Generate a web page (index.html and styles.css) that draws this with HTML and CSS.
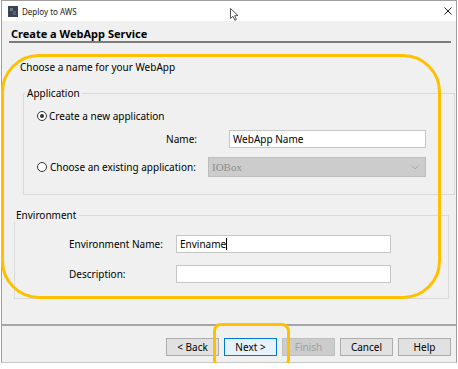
FILE: index.html
```html
<!DOCTYPE html>
<html lang="en">
    <head>
        <meta charset="utf-8">
        <link rel="stylesheet" href="styles.css">
    </head>
    <body>
        <div class="window">
            <div class="titlebar">
                <svg class="app-icon" width="10" height="11" viewBox="0 0 10 11">
                    <rect x="0" y="0" width="10" height="11" fill="#3a4552"/>
                    <rect x="2" y="2" width="3" height="3" fill="#6d7a88"/>
                    <rect x="5" y="5" width="3" height="4" fill="#56626f"/>
                </svg>
                <span class="title">Deploy to AWS</span>
                <svg class="close" width="8" height="8" viewBox="0 0 8 8">
                    <path d="M0.5 0.5 L7.5 7.5 M7.5 0.5 L0.5 7.5" stroke="#222" stroke-width="1"/>
                </svg>
            </div>
            <div class="header">
                <h1>Create a WebApp Service</h1>
            </div>
            <div class="content">
                <p class="intro">Choose a name for your WebApp</p>
                <fieldset class="group app">
                    <legend>Application</legend>
                    <div class="row choice">
                        <span class="radio checked"></span>
                        <span>Create a new application</span>
                    </div>
                    <div class="row field name-row">
                        <label>Name:</label>
                        <div class="input wide">WebApp Name</div>
                    </div>
                    <div class="row choice existing">
                        <span class="radio"></span>
                        <span class="existing-label">Choose an existing application:</span>
                        <div class="combo">
                            <span>IOBox</span>
                            <svg width="8" height="5" viewBox="0 0 8 5">
                                <path d="M0.5 0.5 L4 4 L7.5 0.5" fill="none" stroke="#aaa" stroke-width="1"/>
                            </svg>
                        </div>
                    </div>
                </fieldset>
                <fieldset class="group env">
                    <legend>Environment</legend>
                    <div class="row field">
                        <label>Environment Name:</label>
                        <div class="input">Enviname<span class="caret"></span></div>
                    </div>
                    <div class="row field">
                        <label>Description:</label>
                        <div class="input"></div>
                    </div>
                </fieldset>
            </div>
            <div class="footer">
                <button>&lt; Back</button>
                <button class="focus">Next &gt;</button>
                <button class="disabled">Finish</button>
                <button>Cancel</button>
                <button>Help</button>
            </div>
        </div>
        <div class="mark mark-main"></div>
        <div class="mark mark-next"></div>
        <svg class="pointer" width="9" height="13" viewBox="0 0 9 13">
            <path d="M0.5 0.5 L0.5 10.5 L3 8.3 L4.8 12.3 L6.4 11.6 L4.7 7.7 L8 7.6 Z" fill="#fff" stroke="#555" stroke-width="1"/>
        </svg>
    </body>
</html>
```
FILE: styles.css
```css
body{
    margin: 0;
    background: #fff;
    font-family: "Noto Sans", sans-serif;
    font-size: 10px;
    color: #000;
    position: relative;
}
.window{
    width: 456px;
    height: 363px;
    margin-left: 1px;
    box-sizing: border-box;
    border: 1px solid #a0a0a0;
    border-bottom-color: #c8c8c8;
    background: #f0f0f0;
    display: flex;
    flex-direction: column;
}
.titlebar{
    height: 20px;
    background: #fff;
    display: flex;
    align-items: center;
    padding: 0 3px 0 6px;
}
.app-icon{
    margin-right: 4px;
}
.title{
    font-size: 8px;
    color: #222;
    flex: 1;
}
.close{
    margin-right: 1px;
}
.header{
    padding: 6px 5px 0 7px;
}
.header h1{
    margin: 0;
    padding-left: 2px;
    font-size: 11px;
    line-height: 14px;
    font-weight: bold;
    border-bottom: 2px solid #7c7c7c;
}
.content{
    flex: 1;
}
.intro{
    margin: 17px 0 0 18px;
    line-height: 14px;
}
.group{
    border: 1px solid #dadada;
    padding: 0;
    min-width: 0;
}
.group legend{
    padding: 0 2px;
    line-height: 14px;
}
.app{
    margin: 12px 1px 0 21px;
    padding-bottom: 17px;
}
.app legend{
    margin-left: 1px;
}
.env{
    margin: 13px 7px 0 12px;
    padding-bottom: 15px;
}
.env legend{
    margin-left: -1px;
}
.row{
    display: flex;
    align-items: center;
    line-height: 14px;
}
.choice{
    margin-left: 13px;
}
.app .choice:first-of-type{
    margin-top: 9px;
}
.name-row{
    justify-content: flex-end;
    margin: 7px 28px 0 0;
}
.name-row label{
    margin-right: 32px;
}
.existing{
    margin-top: 9px;
}
.existing-label{
    margin-left: 1px;
    width: 158px;
    white-space: nowrap;
}
.radio{
    width: 10px;
    height: 10px;
    box-sizing: border-box;
    border: 1px solid #333;
    border-radius: 50%;
    background: #fff;
    margin-right: 2px;
    position: relative;
}
.radio.checked::after{
    content: '';
    position: absolute;
    left: 2px;
    top: 2px;
    width: 4px;
    height: 4px;
    border-radius: 50%;
    background: #333;
}
.input{
    width: 197px;
    height: 18px;
    box-sizing: border-box;
    border: 1px solid #c6c6c6;
    background: #fff;
    padding-left: 3px;
    line-height: 16px;
    display: flex;
    align-items: center;
}
.env .input{
    width: 215px;
}
.env .row{
    margin-left: 54px;
    margin-top: 12px;
}
.env .row:first-of-type{
    margin-top: 13px;
}
.env label{
    width: 107px;
}
.caret{
    width: 1px;
    height: 12px;
    background: #000;
}
.combo{
    width: 218px;
    height: 20px;
    box-sizing: border-box;
    border: 1px solid #bdbdbd;
    background: #cccccc;
    display: flex;
    align-items: center;
    justify-content: space-between;
    padding: 0 6px 0 3px;
    font-family: "Liberation Serif", serif;
    font-size: 11px;
    color: #8c8c8c;
}
.footer{
    border-top: 2px solid #a6a6a6;
    height: 38px;
    box-sizing: border-box;
    display: flex;
    justify-content: flex-end;
    align-items: flex-start;
    gap: 5px;
    padding: 12px 5px 0 0;
}
.footer button{
    width: 53px;
    height: 18px;
    box-sizing: border-box;
    border: 1px solid #adadad;
    background: #e1e1e1;
    font-family: "Noto Sans", sans-serif;
    font-size: 10px;
    color: #000;
    padding: 0;
    line-height: 16px;
}
.footer .focus{
    border-color: #0078d7;
    background: #e5f1fb;
}
.footer .disabled{
    border-color: #bfbfbf;
    background: #cccccc;
    color: #a0a0a0;
}
.mark{
    position: absolute;
    border: 3px solid #ffc000;
    box-sizing: border-box;
}
.mark-main{
    left: 1px;
    top: 54px;
    width: 440px;
    height: 245px;
    border-radius: 38px;
}
.mark-next{
    left: 213px;
    top: 323px;
    width: 77px;
    height: 45px;
    border-radius: 8px;
}
.pointer{
    position: absolute;
    left: 230px;
    top: 8px;
}
```
